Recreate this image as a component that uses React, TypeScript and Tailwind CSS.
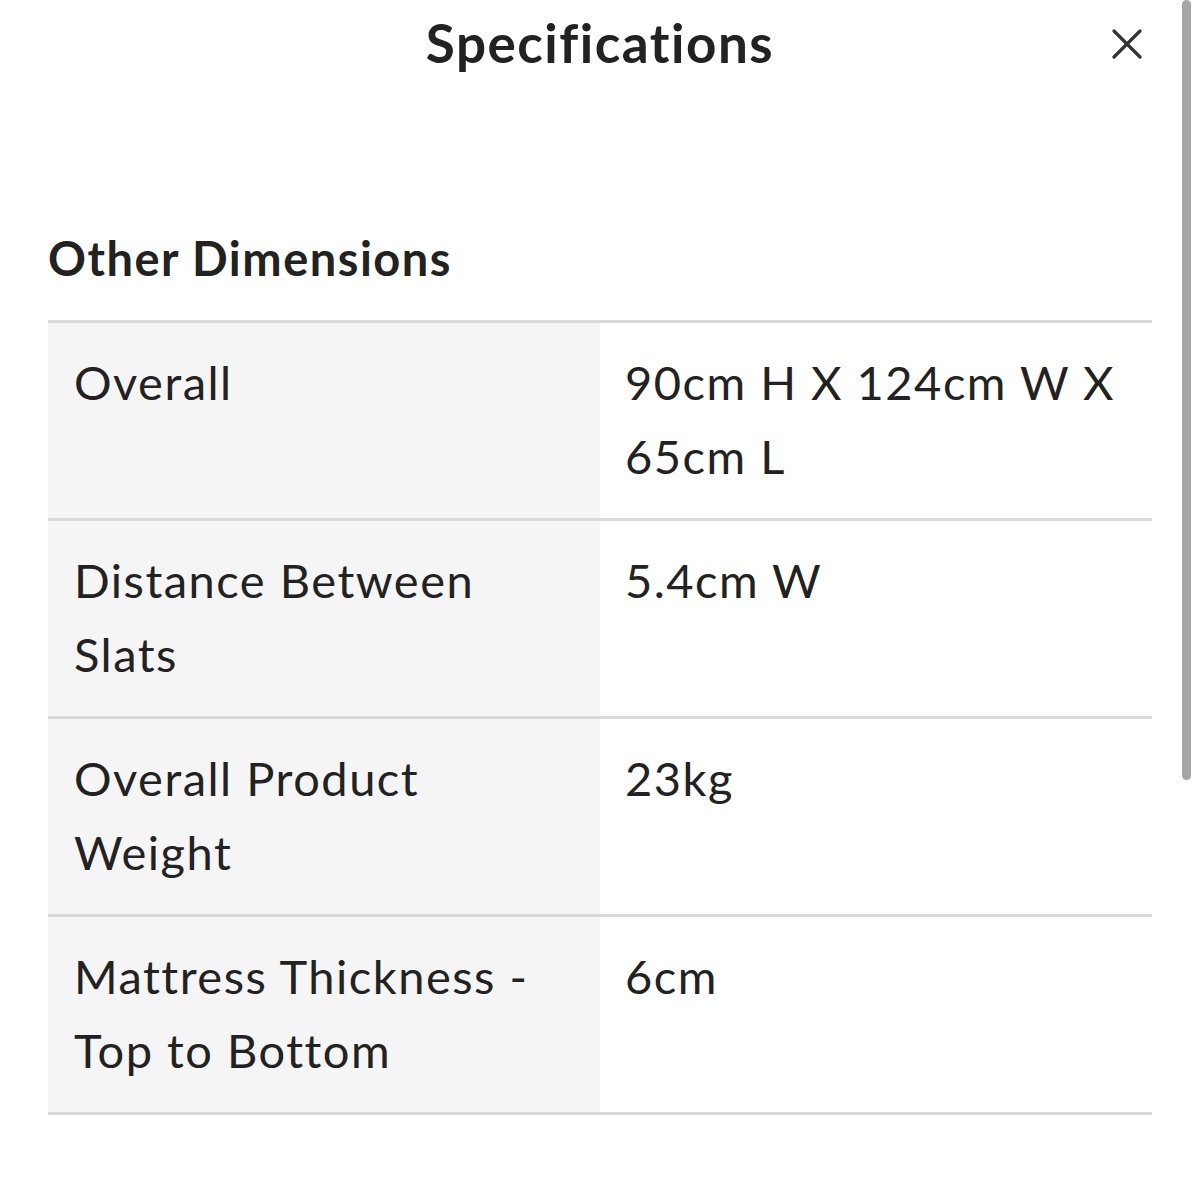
const rows = [
  { label: "Overall", value: "90cm H X 124cm W X 65cm L" },
  { label: "Distance Between Slats", value: "5.4cm W" },
  { label: "Overall Product Weight", value: "23kg" },
  { label: "Mattress Thickness - Top to Bottom", value: "6cm" },
];

function CloseIcon() {
  return (
    <svg width="30" height="30" viewBox="0 0 30 30" fill="none" stroke="#333333" strokeWidth="3.2" strokeLinecap="round">
      <line x1="2" y1="2" x2="28" y2="28" />
      <line x1="28" y1="2" x2="2" y2="28" />
    </svg>
  );
}

export default function App() {
  return (
    <div
      className="relative min-h-[1187px] w-full overflow-hidden bg-white text-[#222222]"
      style={{ fontFamily: "Lato, 'Noto Sans', sans-serif" }}
    >
      <header className="relative flex justify-center pt-[16px]">
        <h1 className="text-[53px] font-bold leading-none tracking-[1.5px]">Specifications</h1>
        <button className="absolute right-[58px] top-[29px]">
          <CloseIcon />
        </button>
      </header>

      <section className="px-[48px]">
        <h2 className="mt-[166px] mb-[38px] text-[47px] font-bold leading-none tracking-[1.5px]">
          Other Dimensions
        </h2>
        <div className="border-t-[3px] border-[#d9d9d9]">
          {rows.map((r) => (
            <div
              key={r.label}
              className="grid grid-cols-2 border-b-[3px] border-[#d9d9d9] text-[47px] leading-[74px] tracking-[1.5px]"
            >
              <div className="bg-[#f5f5f5] pl-[26px] pr-[60px] pt-[22px] pb-[25px]">{r.label}</div>
              <div className="pl-[25px] pr-[20px] pt-[22px] pb-[25px]">{r.value}</div>
            </div>
          ))}
        </div>
      </section>

      {/* scroll thumb */}
      <div className="absolute right-[9px] top-0 h-[780px] w-[9px] rounded-full bg-[#a6a6a6]" />
    </div>
  );
}
